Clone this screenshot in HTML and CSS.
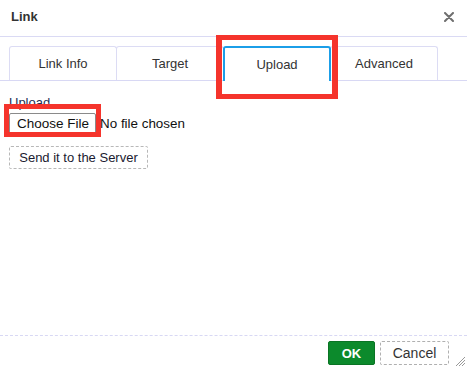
FILE: index.html
```html
<!DOCTYPE html>
<html>
<head>
<meta charset="utf-8">
<link rel="stylesheet" href="styles.css">
</head>
<body>
<div class="dialog">
  <div class="header">
    <span class="title">Link</span>
    <svg class="close" width="10" height="10" viewBox="0 0 10 10"><path d="M1 1L9 9M9 1L1 9" stroke="#6f6f6f" stroke-width="2" stroke-linecap="round"/></svg>
  </div>
  <div class="tabs">
    <div class="tab">Link Info</div>
    <div class="tab">Target</div>
    <div class="tab active">Upload</div>
    <div class="tab">Advanced</div>
  </div>
  <div class="content">
    <div class="label">Upload</div>
    <div class="file-row">
      <button class="choose">Choose File</button>
      <span class="nofile">No file chosen</span>
    </div>
    <button class="send">Send it to the Server</button>
  </div>
  <div class="footer">
    <button class="ok">OK</button>
    <button class="cancel">Cancel</button>
  </div>
  <svg class="resize" width="12" height="12" viewBox="0 0 12 12"><path d="M11 2L2 11M11 5L5 11M11 8L8 11" stroke="#999" stroke-width="1"/></svg>
  <div class="mark mark-tab"></div>
  <div class="mark mark-file"></div>
</div>
</body>
</html>
```
FILE: styles.css
```css
* { box-sizing: border-box; }
html, body { margin: 0; padding: 0; background: #fff; }
.dialog {
  position: relative;
  width: 467px;
  height: 368px;
  display: flex;
  flex-direction: column;
  font-family: "Liberation Sans", Arial, sans-serif;
  color: #333;
  overflow: hidden;
}
.header {
  height: 37px;
  border-bottom: 1px solid #dadaf4;
  display: flex;
  align-items: center;
  justify-content: space-between;
  padding: 0 13px 3px 11px;
}
.title { font-weight: bold; font-size: 13px; color: #333; }
.close { display: block; }
.tabs {
  margin-top: 9px;
  padding-left: 9px;
  display: flex;
  height: 35px;
  border-bottom: 1px solid #d8d8f4;
}
.tab {
  width: 108px;
  height: 34px;
  margin-right: -1px;
  border: 1px solid #dcdcf4;
  border-bottom: none;
  border-radius: 3px 3px 0 0;
  display: flex;
  align-items: center;
  justify-content: center;
  font-size: 13px;
  color: #333;
  padding-bottom: 1px;
  background: #fff;
}
.tab.active {
  border: 2px solid #1b9ee8;
  border-bottom: none;
  height: 35px;
  position: relative;
  z-index: 1;
}
.content {
  flex: 1;
  padding: 14px 9px 0 9px;
  display: flex;
  flex-direction: column;
  align-items: flex-start;
}
.label { font-size: 13px; color: #1f2f55; line-height: 16px; }
.file-row {
  display: flex;
  align-items: center;
  margin-top: 2px;
  gap: 4px;
}
.choose {
  font-family: "Liberation Sans", Arial, sans-serif;
  font-size: 13.5px;
  color: #111;
  height: 21px;
  padding: 0 6px 0 7px;
  background: #fff;
  border: 1px solid #8a8a8a;
  border-radius: 2px;
  line-height: 19px;
}
.nofile { font-size: 13.4px; color: #111; }
.send {
  margin-top: 12px;
  font-family: "Liberation Sans", Arial, sans-serif;
  font-size: 13px;
  color: #1a1a30;
  height: 23px;
  width: 139px;
  padding: 0;
  background: #fff;
  border: 1px dashed #b8b8b8;
  border-radius: 2px;
}
.footer {
  height: 33px;
  border-top: 1px dashed #d8d8f4;
  display: flex;
  justify-content: flex-end;
  align-items: flex-start;
  padding: 5px 18px 0 0;
  gap: 5px;
}
.ok {
  width: 47px;
  height: 24px;
  background: #0c8a2c;
  border: 1px solid #0a7424;
  border-radius: 2px;
  color: #fff;
  font-family: "Liberation Sans", Arial, sans-serif;
  font-weight: bold;
  font-size: 13px;
  padding: 0;
}
.cancel {
  width: 69px;
  height: 24px;
  background: #fff;
  border: 1px dashed #b0b0b0;
  border-radius: 2px;
  color: #333;
  font-family: "Liberation Sans", Arial, sans-serif;
  font-size: 14px;
  padding: 0;
}
.resize { position: absolute; right: 1px; bottom: 1px; }
.mark {
  position: absolute;
  border: 5px solid #f5342c;
  z-index: 5;
}
.mark-tab {
  left: 216px; top: 35px; width: 122px; height: 64px;
  border-width: 5px 6px;
}
.mark-file {
  left: 4px; top: 104px; width: 97px; height: 33px;
}
```
